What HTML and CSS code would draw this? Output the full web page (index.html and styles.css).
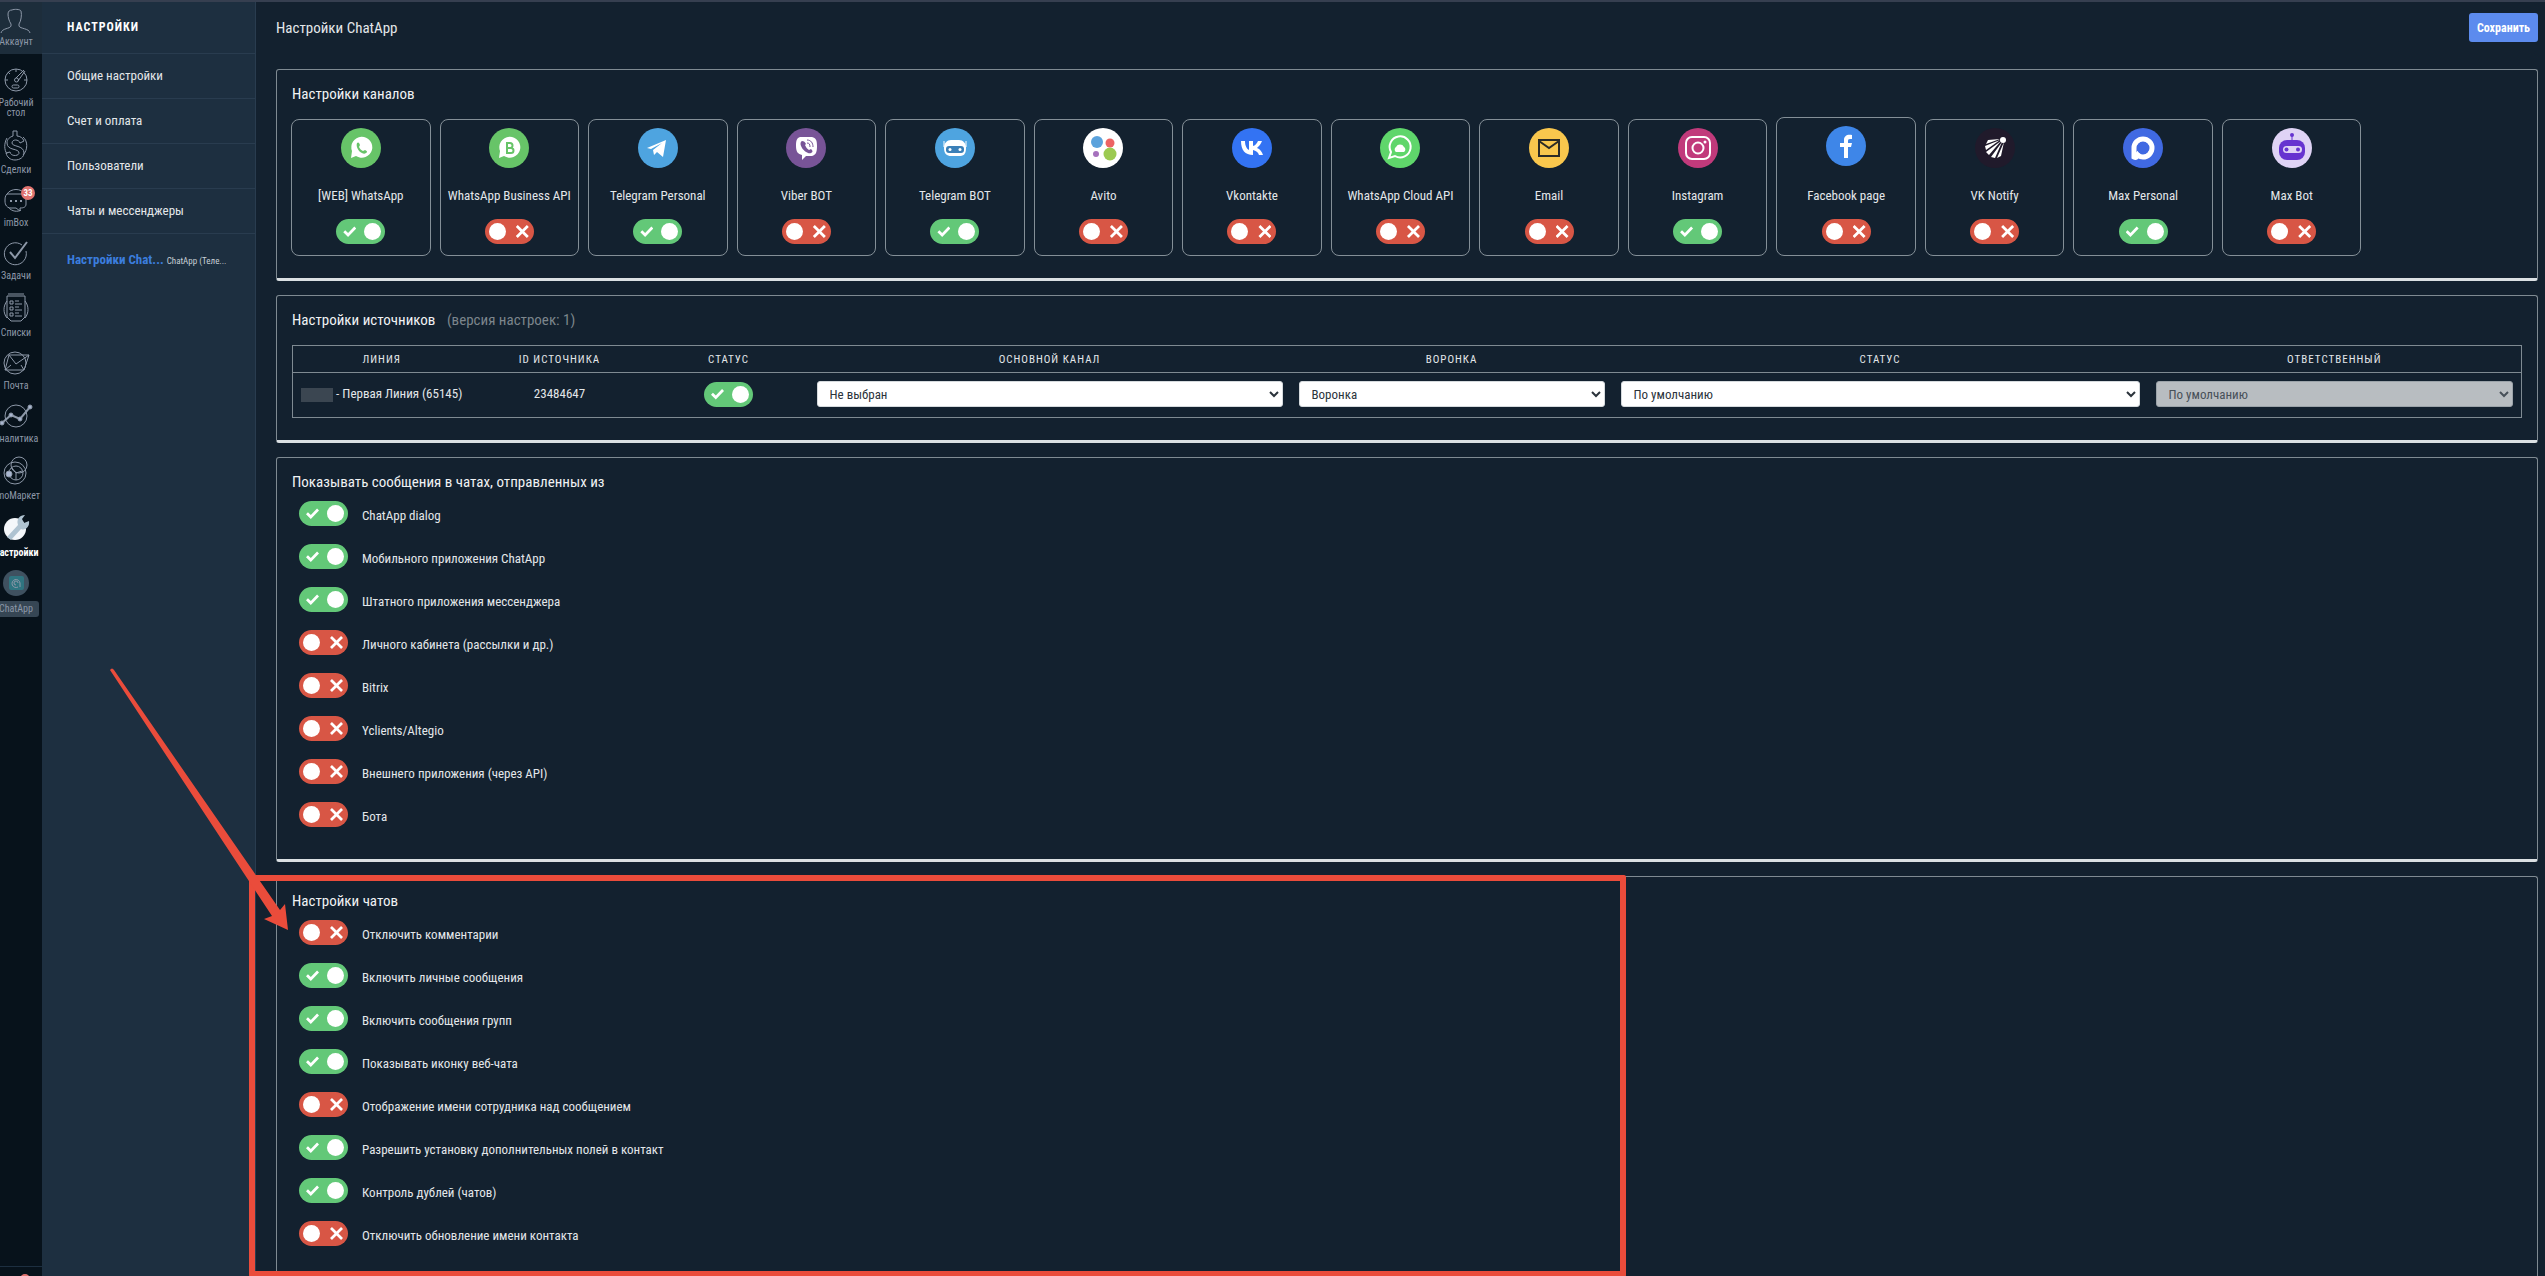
FILE: index.html
```html
<!DOCTYPE html>
<html lang="ru">
<head>
    <meta charset="UTF-8">
    <meta name="viewport" content="width=device-width, initial-scale=1.0">
    <title>Настройки ChatApp</title>
    <link rel="stylesheet" href="styles.css">
</head>
<body>
    <div class="app">
        <nav class="rail">
            <a href="#" class="account">
                <svg width="34" height="26" viewBox="0 0 34 26"><path d="M2 25c1-5 9-4 10-7v-2c-2-3-3-7-3-10 0-3 2-4 4-4 2-1 8-1 9 1 1 4 0 10-2 13v2c1 3 10 2 11 7"/></svg>
                Аккаунт
            </a>
            <div class="rail-menu">
                <a href="#" class="rail-item">
                    <svg viewBox="0 0 28 28"><circle cx="14" cy="14" r="11"/><path d="M14 3v3M3 14h3M22 14h3M6 6l2 2M22 4l-8 8M23 5l-7 10"/><circle cx="14.500" cy="14" r="2"/><rect x="10" y="19" width="7" height="3" rx="1.500"/></svg>
                    Рабочий<br>стол
                </a>
                <a href="#" class="rail-item tall">
                    <svg viewBox="0 0 28 32"><path d="M11 2h4v5c3 0 6 2 7 5l-4 2c-1-4-8-4-8 0 0 4 12 2 12 10 0 4-4 7-9 7-5 0-8-3-9-7l4-1c1 5 9 4 9 1 0-5-12-2-12-10 0-4 3-6 6-7zM5 9c-3 5-3 12 0 16M21 8c5 4 5 13 0 18"/></svg>
                    Сделки
                </a>
                <a href="#" class="rail-item">
                    <svg viewBox="0 0 28 28"><path d="M5 8h15l4 4v6c0 3-2 4-6 4v3l-4-3H9c-4 0-6-3-6-7 0-3 0-5 2-7zM5 8c4-6 14-6 18 0M6 21c4 5 10 5 13 3"/><path class="dots" d="M8 15h2M13 15h2M18 15h2"/></svg>
                    <span class="badge">33</span>
                    imBox
                </a>
                <a href="#" class="rail-item">
                    <svg viewBox="0 0 28 28"><path d="M20 6a11 11 0 1 0 4 6"/><path class="thick" d="M8 13l5 6L25 3"/></svg>
                    Задачи
                </a>
                <a href="#" class="rail-item tall">
                    <svg viewBox="0 0 28 32"><path d="M5 4h18v21l-4 4H9l-4-4zM6 2h16M5 9c-4 5-4 12 0 17M23 9c4 5 4 12 0 17"/><path d="M8 9h3v3H8zM8 15h3v3H8zM8 21h3v3H8zM13 12h7M13 18h7M13 24h7M13 9h4M13 15h4M13 21h4"/></svg>
                    Списки
                </a>
                <a href="#" class="rail-item">
                    <svg viewBox="0 0 28 28"><circle cx="13" cy="14" r="11"/><path d="M7 6h20l-5 15H3zM7 6l7 9L27 6M3 21l6-5M22 21l-3-5"/></svg>
                    Почта
                </a>
                <a href="#" class="rail-item">
                    <svg class="wide" viewBox="0 0 34 28"><circle cx="17" cy="14" r="11"/><path class="thick" d="M3 21l9-8 9 4L31 5"/><g class="solid"><circle cx="3" cy="21" r="2"/><circle cx="12" cy="13" r="2"/><circle cx="21" cy="17" r="2"/><circle cx="31" cy="5" r="2"/></g></svg>
                    Аналитика
                </a>
                <a href="#" class="rail-item tall">
                    <svg viewBox="0 0 28 32"><circle cx="13" cy="18" r="11"/><circle cx="17" cy="10" r="8"/><circle cx="14" cy="18" r="7"/><path d="M14 18l6-2M14 18v7M14 18l-4-5"/><circle class="solid" cx="7" cy="19" r="3"/></svg>
                    amoМаркет
                </a>
                <a href="#" class="rail-item tall active">
                    <svg viewBox="0 0 28 32"><circle cx="13" cy="17" r="11" fill="#f4f7fa"/><path d="M5 25L16 13c-2-6 2-10 7-10l-3 4 2 4 5-2c1 6-4 10-8 8L9 28z" fill="#afc3d1"/></svg>
                    Настройки
                </a>
                <a href="#" class="rail-item chatapp">
                    <svg viewBox="0 0 28 28"><circle cx="14" cy="14" r="13" fill="#3f5160"/><rect x="7" y="7" width="15" height="14" rx="2" fill="#2f7480"/><path d="M16 18a4 4 0 1 1 2-4v4M14 16a2 2 0 1 1 2-2"/></svg>
                    <span>ChatApp</span>
                </a>
            </div>
            <div class="rail-bottom"><i></i></div>
        </nav>

        <aside class="submenu">
            <h1>Настройки</h1>
            <a href="#">Общие настройки</a>
            <a href="#">Счет и оплата</a>
            <a href="#">Пользователи</a>
            <a href="#">Чаты и мессенджеры</a>
            <a href="#" class="current">Настройки Chat... <small>ChatApp (Теле...</small></a>
        </aside>

        <main>
            <header>
                <span>Настройки ChatApp</span>
                <button type="button">Сохранить</button>
            </header>

            <section>
                <h2>Настройки каналов</h2>
                <div class="channels">
                    <label class="channel">
                        <svg viewBox="0 0 40 40"><circle cx="20" cy="20" r="20" fill="#67c468"/><path d="M10 30l1-7a10.500 10.500 0 1 1 4 5z" fill="#fff"/><path d="M16 15c1-1 2-1 3 2l-1 2c1 2 2 3 4 4l2-1c2 1 3 2 1 3-4 3-11-5-9-10z" fill="#67c468"/></svg>
                        <span>[WEB] WhatsApp</span>
                        <input type="checkbox" class="switch" checked>
                    </label>
                    <label class="channel">
                        <svg viewBox="0 0 40 40"><circle cx="20" cy="20" r="20" fill="#67c468"/><path d="M10 30l1-7a10.500 10.500 0 1 1 4 5z" fill="#fff"/><path d="M18 15h3a2 2 0 0 1 0 5h-3zM18 20h4a2 2 0 0 1 0 5h-4z" fill="none" stroke="#67c468" stroke-width="2"/></svg>
                        <span>WhatsApp Business API</span>
                        <input type="checkbox" class="switch">
                    </label>
                    <label class="channel">
                        <svg viewBox="0 0 40 40"><circle cx="20" cy="20" r="20" fill="#4ea4e0"/><path d="M9 20l19-8-3 17-6-5-3 3-1-5 9-7-11 6z" fill="#fff"/></svg>
                        <span>Telegram Personal</span>
                        <input type="checkbox" class="switch" checked>
                    </label>
                    <label class="channel">
                        <svg viewBox="0 0 40 40"><circle cx="20" cy="20" r="20" fill="#785497"/><path d="M14 9h12c4 1 5 3 5 9s-1 9-5 10h-6l-4 4v-5c-4-1-6-3-6-9s1-8 4-9z" fill="#fff"/><path d="M16 13c-5 3 4 14 9 12 2-1 2-2 0-4l-2 1c-2-1-3-3-4-5l1-1c-1-2-2-3-4-3z" fill="#785497"/><path d="M21 12c4 0 6 3 6 7M21 15c2 0 3 1 3 4" fill="none" stroke="#785497"/></svg>
                        <span>Viber BOT</span>
                        <input type="checkbox" class="switch">
                    </label>
                    <label class="channel">
                        <svg viewBox="0 0 40 40"><circle cx="20" cy="20" r="20" fill="#4ea4e0"/><path d="M9 13v6M31 13v6" stroke="#fff"/><path d="M9 20c0-5 3-8 7-8h8c4 0 7 3 7 8 0 7-3 8-7 8h-8c-4 0-7-2-7-8z" fill="#fff"/><rect x="11" y="18" width="18" height="7" rx="3" fill="#3b80b8"/><circle cx="15" cy="21.500" r="1.500" fill="#fff"/><circle cx="25" cy="21.500" r="1.500" fill="#fff"/></svg>
                        <span>Telegram BOT</span>
                        <input type="checkbox" class="switch" checked>
                    </label>
                    <label class="channel">
                        <svg viewBox="0 0 40 40"><circle cx="20" cy="20" r="20" fill="#fff"/><circle cx="14" cy="14" r="6" fill="#5ba2dc"/><circle cx="27" cy="15" r="4.500" fill="#ec6363"/><circle cx="13" cy="26" r="3" fill="#a671bd"/><circle cx="27" cy="26" r="6.500" fill="#9cca51"/></svg>
                        <span>Avito</span>
                        <input type="checkbox" class="switch">
                    </label>
                    <label class="channel">
                        <svg viewBox="0 0 40 40"><circle cx="20" cy="20" r="20" fill="#3373f3"/><path d="M9 13h4c0 5 2 8 4 9v-9h4v5c2 0 4-3 5-5h4c-1 3-3 5-5 7 3 1 5 4 6 7h-4c-1-3-3-4-6-5v5C13 27 9 22 9 13z" fill="#fff"/></svg>
                        <span>Vkontakte</span>
                        <input type="checkbox" class="switch">
                    </label>
                    <label class="channel">
                        <svg viewBox="0 0 40 40"><circle cx="20" cy="20" r="20" fill="#5fd66b"/><path d="M9 30l2-6a10.500 10.500 0 1 1 4 4z" fill="none" stroke="#fff" stroke-width="2"/><path d="M16 24a3 3 0 0 1 0-5 4.500 4.500 0 0 1 8 0 3 3 0 0 1 0 5z" fill="#fff"/></svg>
                        <span>WhatsApp Cloud API</span>
                        <input type="checkbox" class="switch">
                    </label>
                    <label class="channel">
                        <svg viewBox="0 0 40 40"><circle cx="20" cy="20" r="20" fill="#f9c74d"/><path d="M10 12h20v16H10zM10 13l10 7 10-7" fill="none" stroke="#2b2b26" stroke-width="2"/></svg>
                        <span>Email</span>
                        <input type="checkbox" class="switch">
                    </label>
                    <label class="channel">
                        <svg viewBox="0 0 40 40"><circle cx="20" cy="20" r="20" fill="#c13a7b"/><rect x="8" y="9" width="24" height="22" rx="6" fill="none" stroke="#fff" stroke-width="2"/><circle cx="20" cy="20" r="5.500" fill="none" stroke="#fff" stroke-width="2"/><circle cx="27" cy="14" r="1.500" fill="#fff"/></svg>
                        <span>Instagram</span>
                        <input type="checkbox" class="switch" checked>
                    </label>
                    <label class="channel hovered">
                        <svg viewBox="0 0 40 40"><circle cx="20" cy="20" r="20" fill="#3e86e8"/><path d="M18 32V21h-4v-4h4v-3c0-4 3-6 8-5v4c-3 0-4 0-4 2v2h4l-1 4h-3v11z" fill="#fff"/></svg>
                        <span>Facebook page</span>
                        <input type="checkbox" class="switch">
                    </label>
                    <label class="channel">
                        <svg viewBox="0 0 40 40"><circle cx="20" cy="20" r="20" fill="#201a2b"/><circle cx="28" cy="12" r="3" fill="#fff"/><path d="M25 11l-12 1-2 4zM25 12L10 18l1 4zM26 13L11 24l3 3zM27 14L16 29l4 1zM29 14l-7 16 4-2z" fill="#fff"/></svg>
                        <span>VK Notify</span>
                        <input type="checkbox" class="switch">
                    </label>
                    <label class="channel">
                        <svg viewBox="0 0 40 40"><circle cx="20" cy="20" r="20" fill="#4069e2"/><path d="M11 29V20a9 9 0 1 1 9 9c-3 0-4-1-5-2-1 2-2 3-4 2z" fill="none" stroke="#fff" stroke-width="5"/><circle cx="20" cy="20" r="6" fill="#4069e2"/></svg>
                        <span>Max Personal</span>
                        <input type="checkbox" class="switch" checked>
                    </label>
                    <label class="channel">
                        <svg viewBox="0 0 40 40"><circle cx="20" cy="20" r="20" fill="#dfd3f5"/><path d="M20 7v6" stroke="#6633d0"/><circle cx="20" cy="7" r="2" fill="#6633d0"/><rect x="7" y="12" width="26" height="20" rx="8" fill="#6633d0"/><rect x="11" y="18" width="19" height="7" rx="3.500" fill="#dfd3f5"/><circle cx="14.500" cy="21.500" r="2" fill="#6633d0"/><circle cx="26" cy="21.500" r="2" fill="#6633d0"/></svg>
                        <span>Max Bot</span>
                        <input type="checkbox" class="switch">
                    </label>
                </div>
            </section>

            <section>
                <h2>Настройки источников <span class="version">(версия настроек: 1)</span></h2>
                <table>
                    <colgroup>
                        <col class="col-line">
                        <col class="col-id">
                        <col class="col-status">
                        <col class="col-channel">
                        <col class="col-funnel">
                        <col class="col-stage">
                        <col>
                    </colgroup>
                    <thead>
                        <tr>
                            <th>Линия</th>
                            <th>ID источника</th>
                            <th>Статус</th>
                            <th>Основной канал</th>
                            <th>Воронка</th>
                            <th>Статус</th>
                            <th>Ответственный</th>
                        </tr>
                    </thead>
                    <tbody>
                        <tr>
                            <td><span class="hidden-name"></span> - Первая Линия (65145)</td>
                            <td>23484647</td>
                            <td><input type="checkbox" class="switch" aria-label="Статус линии" checked></td>
                            <td><select aria-label="Основной канал"><option>Не выбран</option></select></td>
                            <td><select aria-label="Воронка"><option>Воронка</option></select></td>
                            <td><select aria-label="Статус"><option>По умолчанию</option></select></td>
                            <td><select aria-label="Ответственный" disabled><option>По умолчанию</option></select></td>
                        </tr>
                    </tbody>
                </table>
            </section>

            <section>
                <h2>Показывать сообщения в чатах, отправленных из</h2>
                <div class="options">
                    <label><input type="checkbox" class="switch" checked><span>ChatApp dialog</span></label>
                    <label><input type="checkbox" class="switch" checked><span>Мобильного приложения ChatApp</span></label>
                    <label><input type="checkbox" class="switch" checked><span>Штатного приложения мессенджера</span></label>
                    <label><input type="checkbox" class="switch"><span>Личного кабинета (рассылки и др.)</span></label>
                    <label><input type="checkbox" class="switch"><span>Bitrix</span></label>
                    <label><input type="checkbox" class="switch"><span>Yclients/Altegio</span></label>
                    <label><input type="checkbox" class="switch"><span>Внешнего приложения (через API)</span></label>
                    <label><input type="checkbox" class="switch"><span>Бота</span></label>
                </div>
            </section>

            <section class="chats">
                <h2>Настройки чатов</h2>
                <div class="options">
                    <label><input type="checkbox" class="switch"><span>Отключить комментарии</span></label>
                    <label><input type="checkbox" class="switch" checked><span>Включить личные сообщения</span></label>
                    <label><input type="checkbox" class="switch" checked><span>Включить сообщения групп</span></label>
                    <label><input type="checkbox" class="switch" checked><span>Показывать иконку веб-чата</span></label>
                    <label><input type="checkbox" class="switch"><span>Отображение имени сотрудника над сообщением</span></label>
                    <label><input type="checkbox" class="switch" checked><span>Разрешить установку дополнительных полей в контакт</span></label>
                    <label><input type="checkbox" class="switch" checked><span>Контроль дублей (чатов)</span></label>
                    <label><input type="checkbox" class="switch"><span>Отключить обновление имени контакта</span></label>
                </div>
                <!-- выделение блока и стрелка -->
                <div class="highlight"></div>
                <svg class="arrow" width="180" height="264" viewBox="0 0 180 264"><path d="M1 2Q3-1 5 2L171 242L176 236L179 262L155 251L163 248Z" fill="#ea4c3b"/></svg>
            </section>
        </main>
    </div>
</body>
</html>
```
FILE: styles.css
```css
* {
    box-sizing: border-box;
}
body {
    margin: 0;
    font-family: "Roboto Condensed", "Noto Sans", sans-serif;
    font-size: 13px;
    line-height: 18px;
    background-color: #13212f;
    color: #e3e7ea;
    overflow: hidden;
}
a {
    color: inherit;
    text-decoration: none;
}
.app {
    display: flex;
    height: 100vh;
    border-top: 2px solid #363f50;
}

/* Левая панель */
.rail {
    display: flex;
    flex-direction: column;
    flex: none;
    width: 42px;
    overflow: hidden;
    background-color: #07121b;
    color: #8d98a8;
    font-size: 10px;
    line-height: 10px;
}
.rail svg {
    fill: none;
    stroke: #8d98a8;
    stroke-width: 1;
}
.account {
    display: flex;
    flex-direction: column;
    align-items: center;
    gap: 3px;
    width: 32px;
    height: 52px;
    padding-top: 6px;
    background-color: #1d2d3b;
    box-shadow: 10px 0 #1d2d3b;
}
.rail-menu {
    width: 60px;
    margin: 12px 0 0 -14px;
}
.rail-item {
    position: relative;
    display: block;
    padding-bottom: 11px;
    text-align: center;
}
.rail-item svg {
    display: block;
    width: 28px;
    height: 28px;
    margin: 0 auto 4px;
}
.rail-item .wide {
    width: 34px;
}
.rail-item.tall svg {
    height: 32px;
}
.rail .thick,
.rail .dots {
    stroke-width: 2;
}
.rail .solid {
    fill: #a9b6d0;
}
.rail .active svg,
.rail .chatapp circle,
.rail .chatapp rect {
    stroke: none;
}
.active {
    color: #fff;
    font-weight: bold;
}
.badge {
    position: absolute;
    top: 0;
    left: 35px;
    width: 14px;
    height: 14px;
    border-radius: 50%;
    background-color: #e0736f;
    color: #fff;
    font-size: 9px;
    font-weight: bold;
    line-height: 14px;
}
.chatapp span {
    display: block;
    width: 46px;
    margin: 0 auto;
    border-radius: 3px;
    background-color: #364654;
    line-height: 16px;
}
.rail-bottom {
    flex: none;
    height: 10px;
    margin-top: auto;
    padding: 7px 0 0 20px;
    border-top: 1px solid #1d2f40;
    overflow: hidden;
}
.rail-bottom i {
    display: block;
    width: 10px;
    height: 10px;
    border-radius: 50%;
    background-color: #e0736f;
}

/* Меню настроек */
.submenu {
    flex: none;
    width: 214px;
    background-color: #1d2f40;
    border-right: 1px solid #293c4f;
}
.submenu h1 {
    margin: 0;
    padding-left: 25px;
    border-bottom: 1px solid #293c4f;
    font-size: 12px;
    line-height: 51px;
    letter-spacing: 1px;
    text-transform: uppercase;
    color: #fff;
}
.submenu a {
    display: block;
    padding-left: 25px;
    border-bottom: 1px solid #293c4f;
    line-height: 44px;
}
.submenu .current {
    border-bottom: 0;
    line-height: 52px;
    font-weight: bold;
    color: #3b7ddd;
}
.current small {
    font-size: 9px;
    font-weight: normal;
    color: #c8d0d6;
}

main {
    flex: 1;
    min-width: 0;
    padding: 0 7px 0 20px;
}
header {
    display: flex;
    justify-content: space-between;
    align-items: center;
    padding: 11px 0 27px;
    font-size: 15px;
}
header button {
    height: 29px;
    padding: 0 8px;
    border: 0;
    border-radius: 3px;
    background-color: #5c8bee;
    color: #fff;
    font-family: inherit;
    font-size: 12px;
    font-weight: bold;
}
section {
    position: relative;
    margin-bottom: 14px;
    padding: 13px 15px 22px;
    border: 1px solid #7f8a92;
    border-bottom: 3px solid #dbe0e3;
    border-radius: 3px;
}
h2 {
    margin: 0 0 8px;
    font-size: 15px;
    font-weight: normal;
    line-height: 22px;
    color: #f0f2f4;
}
.version {
    margin-left: 8px;
    color: #7c858c;
}

/* Переключатель */
.switch {
    appearance: none;
    position: relative;
    flex: none;
    width: 49px;
    height: 25px;
    margin: 0;
    border-radius: 13px;
    background-color: #d85645;
    vertical-align: middle;
    cursor: pointer;
}
.switch::before {
    content: "";
    position: absolute;
    top: 6px;
    left: 31px;
    width: 13px;
    height: 13px;
    background-color: #fff;
    clip-path: polygon(0 15%, 15% 0, 50% 35%, 85% 0, 100% 15%, 65% 50%, 100% 85%, 85% 100%, 50% 65%, 15% 100%, 0 85%, 35% 50%);
}
.switch::after {
    content: "";
    position: absolute;
    top: 4px;
    left: 4px;
    width: 17px;
    height: 17px;
    border-radius: 50%;
    background-color: #fff;
}
.switch:checked {
    background-color: #63c878;
}
.switch:checked::before {
    left: 7px;
    clip-path: polygon(0 55%, 15% 40%, 37% 62%, 85% 12%, 100% 27%, 37% 92%);
}
.switch:checked::after {
    left: 28px;
}

.channels {
    display: grid;
    grid-template-columns: repeat(15, 1fr);
    gap: 9px;
    align-items: end;
    margin: 14px 0 0 -1px;
    padding-right: 12px;
}
.channel {
    display: flex;
    flex-direction: column;
    align-items: center;
    padding: 8px 0 11px;
    border: 1px solid #848f97;
    border-radius: 8px;
    white-space: nowrap;
    cursor: pointer;
}
.channel svg {
    width: 40px;
    height: 40px;
}
.channel span {
    margin: 19px 0 14px;
}
.hovered {
    margin-top: -2px;
}
.hovered span {
    margin-top: 21px;
}

table {
    width: 100%;
    margin-top: 14px;
    border: 1px solid #7f8a92;
    border-collapse: collapse;
    table-layout: fixed;
    text-align: center;
}
.col-line,
.col-id {
    width: 178px;
}
.col-status {
    width: 160px;
}
.col-channel {
    width: 482px;
}
.col-funnel {
    width: 322px;
}
.col-stage {
    width: 535px;
}
th {
    height: 27px;
    padding: 2px 0 0;
    border-bottom: 1px solid #7f8a92;
    font-size: 11px;
    font-weight: normal;
    letter-spacing: 1px;
    text-transform: uppercase;
}
td {
    height: 45px;
    padding: 0 8px 2px;
}
.hidden-name {
    display: inline-block;
    width: 32px;
    height: 14px;
    background-color: #3b4651;
    vertical-align: middle;
}
select {
    display: block;
    width: 100%;
    height: 26px;
    padding: 0 0 0 8px;
    border: 1px solid #d5dadd;
    border-radius: 3px;
    background-color: #fff;
    color: #2b333b;
    font-family: inherit;
    font-size: 13px;
}
select:disabled {
    color: #5d656c;
}

.options {
    display: flex;
    flex-direction: column;
    align-items: flex-start;
    gap: 18px;
    padding: 0 0 10px 7px;
}
.options label {
    display: flex;
    align-items: center;
    gap: 14px;
    cursor: pointer;
}
.options span {
    padding-top: 4px;
}

.highlight {
    position: absolute;
    top: -2px;
    left: -28px;
    width: 1377px;
    height: 402px;
    border: 6px solid #ea4c3b;
    border-radius: 2px;
    pointer-events: none;
}
.arrow {
    position: absolute;
    top: -209px;
    left: -168px;
    pointer-events: none;
}
```
